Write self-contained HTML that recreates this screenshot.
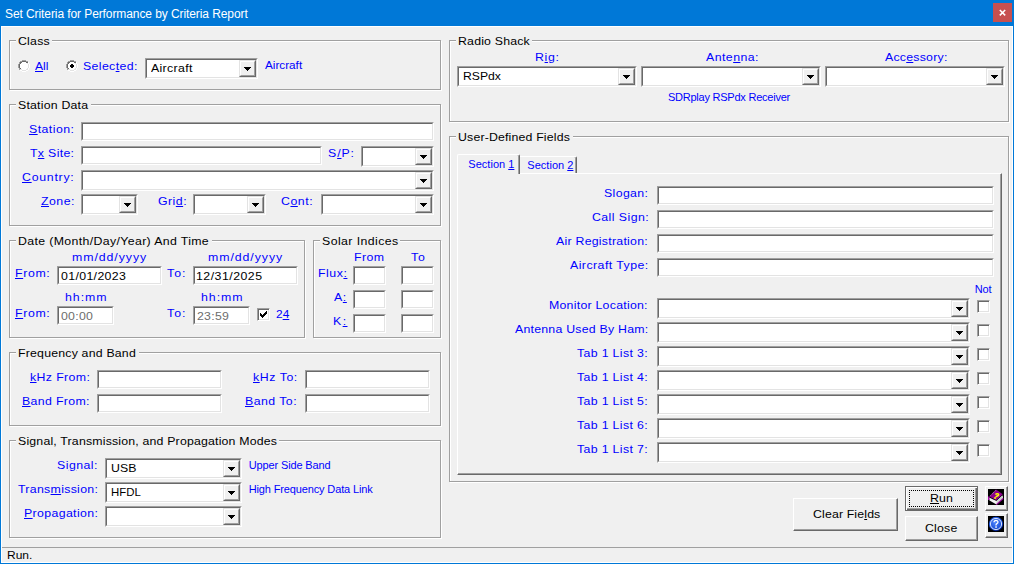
<!DOCTYPE html>
<html><head><meta charset="utf-8"><title>Set Criteria</title><style>
html,body{margin:0;padding:0;width:1014px;height:564px;overflow:hidden;background:#f0f0f0}
body{position:relative}
div{position:absolute;box-sizing:content-box}
.t{transform-origin:0 0;font-family:"Liberation Sans",sans-serif;line-height:13px;white-space:pre}
.t u{text-decoration:underline;text-underline-offset:1px}
.sk{border-style:solid;border-width:1px;border-color:#a0a0a0 #ffffff #ffffff #a0a0a0}
.sk i{position:absolute;left:0;top:0;right:0;bottom:0;border-style:solid;border-width:1px;border-color:#696969 #e3e3e3 #e3e3e3 #696969}
.cb{background:#fff;border-style:solid;border-width:2px 1px 1px 2px;border-color:#696969 #ffffff #ffffff #696969;box-shadow:-1px -1px 0 0 #a0a0a0}
.btn{background:#f0f0f0;border-style:solid;border-width:1px;border-color:#e3e3e3 #696969 #696969 #e3e3e3}
.btn i{position:absolute;left:0;top:0;right:0;bottom:0;border-style:solid;border-width:1px;border-color:#ffffff #a0a0a0 #a0a0a0 #ffffff}
.rb{background:#f0f0f0;border-style:solid;border-width:1px;border-color:#ffffff #696969 #696969 #ffffff}
.rb i{position:absolute;left:0;top:0;right:0;bottom:0;border-style:solid;border-width:0 1px 1px 0;border-color:#a0a0a0}
.defb{background:#f0f0f0;border:1px solid #696969;box-shadow:inset 1px 1px 0 #ffffff, inset -1px -1px 0 #696969}
.defb i{position:absolute;left:0;top:0;right:0;bottom:0;border-style:solid;border-width:0 1px 1px 0;border-color:#a0a0a0;margin:1px}
.chk{width:11px;height:11px;background:#fff;border-style:solid;border-width:1px;border-color:#a0a0a0 #ffffff #ffffff #a0a0a0;box-shadow:inset 1px 1px 0 #696969, inset -1px -1px 0 #e3e3e3}
.tabp{background:#f0f0f0;border-style:solid;border-width:1px;border-color:#ffffff #696969 #696969 #ffffff;box-shadow:inset -1px -1px 0 #a0a0a0}
.tab1{background:#f0f0f0;border-style:solid;border-width:1px 1px 0 1px;border-color:#ffffff #696969 #f0f0f0 #ffffff;border-radius:2px 2px 0 0;box-shadow:inset -1px 0 0 #a0a0a0}
.tab2{background:#f0f0f0;border-style:solid;border-width:1px 1px 0 0;border-color:#ffffff #696969 #f0f0f0 #ffffff;border-radius:0 2px 0 0;box-shadow:inset -1px 0 0 #a0a0a0}
svg{position:absolute}
</style></head>
<body>
<div style="left:0px;top:0px;width:1014px;height:26px;background:#0078d7"></div>
<div style="left:0px;top:26px;width:1px;height:538px;background:#0078d7"></div>
<div style="left:1013px;top:26px;width:1px;height:538px;background:#0078d7"></div>
<div style="left:0px;top:563px;width:1014px;height:1px;background:#0078d7"></div>
<div style="left:1px;top:26px;width:1012px;height:1px;background:#ffffff"></div>
<div style="left:1px;top:26px;width:1px;height:537px;background:#ffffff"></div>
<div style="left:1012px;top:26px;width:1px;height:537px;background:#ffffff"></div>
<div style="left:1px;top:562px;width:1012px;height:1px;background:#ffffff"></div>
<div style="left:993px;top:3px;width:19px;height:19px;background:#c75050"></div>
<svg style="position:absolute;left:993px;top:3px" width="19" height="19" viewBox="0 0 19 19"><path d="M6.8 7 L12.2 12.4 M12.2 7 L6.8 12.4" stroke="#fff" stroke-width="1.5"/></svg>
<div style="left:10px;top:41px;width:432px;height:1px;background:#ffffff"></div>
<div style="left:10px;top:41px;width:1px;height:50px;background:#ffffff"></div>
<div style="left:10px;top:90px;width:432px;height:1px;background:#ffffff"></div>
<div style="left:441px;top:41px;width:1px;height:50px;background:#ffffff"></div>
<div style="left:9px;top:40px;width:432px;height:1px;background:#a0a0a0"></div>
<div style="left:9px;top:40px;width:1px;height:50px;background:#a0a0a0"></div>
<div style="left:9px;top:89px;width:432px;height:1px;background:#a0a0a0"></div>
<div style="left:440px;top:40px;width:1px;height:50px;background:#a0a0a0"></div>
<div style="left:16px;top:40px;width:36px;height:2px;background:#f0f0f0"></div>
<svg style="position:absolute;left:18px;top:60px" width="12" height="12" shape-rendering="crispEdges"><rect x="4" y="2" width="4" height="1" fill="#fff"/><rect x="3" y="3" width="6" height="1" fill="#fff"/><rect x="2" y="4" width="8" height="1" fill="#fff"/><rect x="2" y="5" width="8" height="1" fill="#fff"/><rect x="2" y="6" width="8" height="1" fill="#fff"/><rect x="2" y="7" width="8" height="1" fill="#fff"/><rect x="3" y="8" width="6" height="1" fill="#fff"/><rect x="4" y="9" width="4" height="1" fill="#fff"/><rect x="4" y="0" width="1" height="1" fill="#a0a0a0"/><rect x="5" y="0" width="1" height="1" fill="#a0a0a0"/><rect x="6" y="0" width="1" height="1" fill="#a0a0a0"/><rect x="7" y="0" width="1" height="1" fill="#a0a0a0"/><rect x="2" y="1" width="1" height="1" fill="#a0a0a0"/><rect x="3" y="1" width="1" height="1" fill="#a0a0a0"/><rect x="8" y="1" width="1" height="1" fill="#a0a0a0"/><rect x="9" y="1" width="1" height="1" fill="#a0a0a0"/><rect x="1" y="2" width="1" height="1" fill="#a0a0a0"/><rect x="10" y="2" width="1" height="1" fill="#ffffff"/><rect x="1" y="3" width="1" height="1" fill="#a0a0a0"/><rect x="10" y="3" width="1" height="1" fill="#ffffff"/><rect x="0" y="4" width="1" height="1" fill="#a0a0a0"/><rect x="11" y="4" width="1" height="1" fill="#ffffff"/><rect x="0" y="5" width="1" height="1" fill="#a0a0a0"/><rect x="11" y="5" width="1" height="1" fill="#ffffff"/><rect x="0" y="6" width="1" height="1" fill="#a0a0a0"/><rect x="11" y="6" width="1" height="1" fill="#ffffff"/><rect x="0" y="7" width="1" height="1" fill="#a0a0a0"/><rect x="11" y="7" width="1" height="1" fill="#ffffff"/><rect x="1" y="8" width="1" height="1" fill="#a0a0a0"/><rect x="10" y="8" width="1" height="1" fill="#ffffff"/><rect x="1" y="9" width="1" height="1" fill="#a0a0a0"/><rect x="10" y="9" width="1" height="1" fill="#ffffff"/><rect x="2" y="10" width="1" height="1" fill="#ffffff"/><rect x="3" y="10" width="1" height="1" fill="#ffffff"/><rect x="8" y="10" width="1" height="1" fill="#ffffff"/><rect x="9" y="10" width="1" height="1" fill="#ffffff"/><rect x="4" y="11" width="1" height="1" fill="#ffffff"/><rect x="5" y="11" width="1" height="1" fill="#ffffff"/><rect x="6" y="11" width="1" height="1" fill="#ffffff"/><rect x="7" y="11" width="1" height="1" fill="#ffffff"/><rect x="4" y="1" width="1" height="1" fill="#696969"/><rect x="5" y="1" width="1" height="1" fill="#696969"/><rect x="6" y="1" width="1" height="1" fill="#696969"/><rect x="7" y="1" width="1" height="1" fill="#696969"/><rect x="2" y="2" width="1" height="1" fill="#696969"/><rect x="3" y="2" width="1" height="1" fill="#696969"/><rect x="8" y="2" width="1" height="1" fill="#696969"/><rect x="9" y="2" width="1" height="1" fill="#696969"/><rect x="2" y="3" width="1" height="1" fill="#696969"/><rect x="9" y="3" width="1" height="1" fill="#e3e3e3"/><rect x="1" y="4" width="1" height="1" fill="#696969"/><rect x="10" y="4" width="1" height="1" fill="#e3e3e3"/><rect x="1" y="5" width="1" height="1" fill="#696969"/><rect x="10" y="5" width="1" height="1" fill="#e3e3e3"/><rect x="1" y="6" width="1" height="1" fill="#696969"/><rect x="10" y="6" width="1" height="1" fill="#e3e3e3"/><rect x="1" y="7" width="1" height="1" fill="#696969"/><rect x="10" y="7" width="1" height="1" fill="#e3e3e3"/><rect x="2" y="8" width="1" height="1" fill="#696969"/><rect x="9" y="8" width="1" height="1" fill="#e3e3e3"/><rect x="2" y="9" width="1" height="1" fill="#e3e3e3"/><rect x="3" y="9" width="1" height="1" fill="#e3e3e3"/><rect x="8" y="9" width="1" height="1" fill="#e3e3e3"/><rect x="9" y="9" width="1" height="1" fill="#e3e3e3"/><rect x="4" y="10" width="1" height="1" fill="#e3e3e3"/><rect x="5" y="10" width="1" height="1" fill="#e3e3e3"/><rect x="6" y="10" width="1" height="1" fill="#e3e3e3"/><rect x="7" y="10" width="1" height="1" fill="#e3e3e3"/></svg>
<svg style="position:absolute;left:66px;top:60px" width="12" height="12" shape-rendering="crispEdges"><rect x="4" y="2" width="4" height="1" fill="#fff"/><rect x="3" y="3" width="6" height="1" fill="#fff"/><rect x="2" y="4" width="8" height="1" fill="#fff"/><rect x="2" y="5" width="8" height="1" fill="#fff"/><rect x="2" y="6" width="8" height="1" fill="#fff"/><rect x="2" y="7" width="8" height="1" fill="#fff"/><rect x="3" y="8" width="6" height="1" fill="#fff"/><rect x="4" y="9" width="4" height="1" fill="#fff"/><rect x="4" y="0" width="1" height="1" fill="#a0a0a0"/><rect x="5" y="0" width="1" height="1" fill="#a0a0a0"/><rect x="6" y="0" width="1" height="1" fill="#a0a0a0"/><rect x="7" y="0" width="1" height="1" fill="#a0a0a0"/><rect x="2" y="1" width="1" height="1" fill="#a0a0a0"/><rect x="3" y="1" width="1" height="1" fill="#a0a0a0"/><rect x="8" y="1" width="1" height="1" fill="#a0a0a0"/><rect x="9" y="1" width="1" height="1" fill="#a0a0a0"/><rect x="1" y="2" width="1" height="1" fill="#a0a0a0"/><rect x="10" y="2" width="1" height="1" fill="#ffffff"/><rect x="1" y="3" width="1" height="1" fill="#a0a0a0"/><rect x="10" y="3" width="1" height="1" fill="#ffffff"/><rect x="0" y="4" width="1" height="1" fill="#a0a0a0"/><rect x="11" y="4" width="1" height="1" fill="#ffffff"/><rect x="0" y="5" width="1" height="1" fill="#a0a0a0"/><rect x="11" y="5" width="1" height="1" fill="#ffffff"/><rect x="0" y="6" width="1" height="1" fill="#a0a0a0"/><rect x="11" y="6" width="1" height="1" fill="#ffffff"/><rect x="0" y="7" width="1" height="1" fill="#a0a0a0"/><rect x="11" y="7" width="1" height="1" fill="#ffffff"/><rect x="1" y="8" width="1" height="1" fill="#a0a0a0"/><rect x="10" y="8" width="1" height="1" fill="#ffffff"/><rect x="1" y="9" width="1" height="1" fill="#a0a0a0"/><rect x="10" y="9" width="1" height="1" fill="#ffffff"/><rect x="2" y="10" width="1" height="1" fill="#ffffff"/><rect x="3" y="10" width="1" height="1" fill="#ffffff"/><rect x="8" y="10" width="1" height="1" fill="#ffffff"/><rect x="9" y="10" width="1" height="1" fill="#ffffff"/><rect x="4" y="11" width="1" height="1" fill="#ffffff"/><rect x="5" y="11" width="1" height="1" fill="#ffffff"/><rect x="6" y="11" width="1" height="1" fill="#ffffff"/><rect x="7" y="11" width="1" height="1" fill="#ffffff"/><rect x="4" y="1" width="1" height="1" fill="#696969"/><rect x="5" y="1" width="1" height="1" fill="#696969"/><rect x="6" y="1" width="1" height="1" fill="#696969"/><rect x="7" y="1" width="1" height="1" fill="#696969"/><rect x="2" y="2" width="1" height="1" fill="#696969"/><rect x="3" y="2" width="1" height="1" fill="#696969"/><rect x="8" y="2" width="1" height="1" fill="#696969"/><rect x="9" y="2" width="1" height="1" fill="#696969"/><rect x="2" y="3" width="1" height="1" fill="#696969"/><rect x="9" y="3" width="1" height="1" fill="#e3e3e3"/><rect x="1" y="4" width="1" height="1" fill="#696969"/><rect x="10" y="4" width="1" height="1" fill="#e3e3e3"/><rect x="1" y="5" width="1" height="1" fill="#696969"/><rect x="10" y="5" width="1" height="1" fill="#e3e3e3"/><rect x="1" y="6" width="1" height="1" fill="#696969"/><rect x="10" y="6" width="1" height="1" fill="#e3e3e3"/><rect x="1" y="7" width="1" height="1" fill="#696969"/><rect x="10" y="7" width="1" height="1" fill="#e3e3e3"/><rect x="2" y="8" width="1" height="1" fill="#696969"/><rect x="9" y="8" width="1" height="1" fill="#e3e3e3"/><rect x="2" y="9" width="1" height="1" fill="#e3e3e3"/><rect x="3" y="9" width="1" height="1" fill="#e3e3e3"/><rect x="8" y="9" width="1" height="1" fill="#e3e3e3"/><rect x="9" y="9" width="1" height="1" fill="#e3e3e3"/><rect x="4" y="10" width="1" height="1" fill="#e3e3e3"/><rect x="5" y="10" width="1" height="1" fill="#e3e3e3"/><rect x="6" y="10" width="1" height="1" fill="#e3e3e3"/><rect x="7" y="10" width="1" height="1" fill="#e3e3e3"/><rect x="5" y="4" width="2" height="4" fill="#000"/><rect x="4" y="5" width="4" height="2" fill="#000"/></svg>
<div class="sk" style="left:145px;top:58px;width:111px;height:19px;background:#ffffff"><i></i></div>
<div class="btn" style="left:239px;top:60px;width:15px;height:15px"><i></i></div>
<div style="left:244px;top:67px;width:7px;height:1px;background:#000"></div>
<div style="left:245px;top:68px;width:5px;height:1px;background:#000"></div>
<div style="left:246px;top:69px;width:3px;height:1px;background:#000"></div>
<div style="left:247px;top:70px;width:1px;height:1px;background:#000"></div>
<div style="left:10px;top:105px;width:432px;height:1px;background:#ffffff"></div>
<div style="left:10px;top:105px;width:1px;height:122px;background:#ffffff"></div>
<div style="left:10px;top:226px;width:432px;height:1px;background:#ffffff"></div>
<div style="left:441px;top:105px;width:1px;height:122px;background:#ffffff"></div>
<div style="left:9px;top:104px;width:432px;height:1px;background:#a0a0a0"></div>
<div style="left:9px;top:104px;width:1px;height:122px;background:#a0a0a0"></div>
<div style="left:9px;top:225px;width:432px;height:1px;background:#a0a0a0"></div>
<div style="left:440px;top:104px;width:1px;height:122px;background:#a0a0a0"></div>
<div style="left:16px;top:104px;width:75.4px;height:2px;background:#f0f0f0"></div>
<div class="sk" style="left:81px;top:122px;width:351px;height:17px;background:#ffffff"><i></i></div>
<div class="sk" style="left:81px;top:146px;width:239px;height:17px;background:#ffffff"><i></i></div>
<div class="sk" style="left:361px;top:146px;width:71px;height:19px;background:#ffffff"><i></i></div>
<div class="btn" style="left:415px;top:148px;width:15px;height:15px"><i></i></div>
<div style="left:420px;top:155px;width:7px;height:1px;background:#000"></div>
<div style="left:421px;top:156px;width:5px;height:1px;background:#000"></div>
<div style="left:422px;top:157px;width:3px;height:1px;background:#000"></div>
<div style="left:423px;top:158px;width:1px;height:1px;background:#000"></div>
<div class="sk" style="left:81px;top:170px;width:351px;height:19px;background:#ffffff"><i></i></div>
<div class="btn" style="left:415px;top:172px;width:15px;height:15px"><i></i></div>
<div style="left:420px;top:179px;width:7px;height:1px;background:#000"></div>
<div style="left:421px;top:180px;width:5px;height:1px;background:#000"></div>
<div style="left:422px;top:181px;width:3px;height:1px;background:#000"></div>
<div style="left:423px;top:182px;width:1px;height:1px;background:#000"></div>
<div class="sk" style="left:81px;top:194px;width:55px;height:19px;background:#ffffff"><i></i></div>
<div class="btn" style="left:119px;top:196px;width:15px;height:15px"><i></i></div>
<div style="left:124px;top:203px;width:7px;height:1px;background:#000"></div>
<div style="left:125px;top:204px;width:5px;height:1px;background:#000"></div>
<div style="left:126px;top:205px;width:3px;height:1px;background:#000"></div>
<div style="left:127px;top:206px;width:1px;height:1px;background:#000"></div>
<div class="sk" style="left:193px;top:194px;width:71px;height:19px;background:#ffffff"><i></i></div>
<div class="btn" style="left:247px;top:196px;width:15px;height:15px"><i></i></div>
<div style="left:252px;top:203px;width:7px;height:1px;background:#000"></div>
<div style="left:253px;top:204px;width:5px;height:1px;background:#000"></div>
<div style="left:254px;top:205px;width:3px;height:1px;background:#000"></div>
<div style="left:255px;top:206px;width:1px;height:1px;background:#000"></div>
<div class="sk" style="left:321px;top:194px;width:111px;height:19px;background:#ffffff"><i></i></div>
<div class="btn" style="left:415px;top:196px;width:15px;height:15px"><i></i></div>
<div style="left:420px;top:203px;width:7px;height:1px;background:#000"></div>
<div style="left:421px;top:204px;width:5px;height:1px;background:#000"></div>
<div style="left:422px;top:205px;width:3px;height:1px;background:#000"></div>
<div style="left:423px;top:206px;width:1px;height:1px;background:#000"></div>
<div style="left:10px;top:241px;width:296px;height:1px;background:#ffffff"></div>
<div style="left:10px;top:241px;width:1px;height:98px;background:#ffffff"></div>
<div style="left:10px;top:338px;width:296px;height:1px;background:#ffffff"></div>
<div style="left:305px;top:241px;width:1px;height:98px;background:#ffffff"></div>
<div style="left:9px;top:240px;width:296px;height:1px;background:#a0a0a0"></div>
<div style="left:9px;top:240px;width:1px;height:98px;background:#a0a0a0"></div>
<div style="left:9px;top:337px;width:296px;height:1px;background:#a0a0a0"></div>
<div style="left:304px;top:240px;width:1px;height:98px;background:#a0a0a0"></div>
<div style="left:16px;top:240px;width:195.6px;height:2px;background:#f0f0f0"></div>
<div class="sk" style="left:57px;top:266px;width:103px;height:17px;background:#ffffff"><i></i></div>
<div class="sk" style="left:193px;top:266px;width:103px;height:17px;background:#ffffff"><i></i></div>
<div class="sk" style="left:57px;top:306px;width:55px;height:17px;background:#ffffff"><i></i></div>
<div class="sk" style="left:193px;top:306px;width:55px;height:17px;background:#ffffff"><i></i></div>
<div class="chk" style="left:257px;top:308px"></div>
<svg style="position:absolute;left:257px;top:308px" width="13" height="13" shape-rendering="crispEdges"><rect x="9" y="3" width="1" height="1" fill="#000"/><rect x="8" y="4" width="1" height="1" fill="#000"/><rect x="9" y="4" width="1" height="1" fill="#000"/><rect x="3" y="5" width="1" height="1" fill="#000"/><rect x="7" y="5" width="1" height="1" fill="#000"/><rect x="8" y="5" width="1" height="1" fill="#000"/><rect x="9" y="5" width="1" height="1" fill="#000"/><rect x="3" y="6" width="1" height="1" fill="#000"/><rect x="4" y="6" width="1" height="1" fill="#000"/><rect x="6" y="6" width="1" height="1" fill="#000"/><rect x="7" y="6" width="1" height="1" fill="#000"/><rect x="8" y="6" width="1" height="1" fill="#000"/><rect x="3" y="7" width="1" height="1" fill="#000"/><rect x="4" y="7" width="1" height="1" fill="#000"/><rect x="5" y="7" width="1" height="1" fill="#000"/><rect x="6" y="7" width="1" height="1" fill="#000"/><rect x="7" y="7" width="1" height="1" fill="#000"/><rect x="4" y="8" width="1" height="1" fill="#000"/><rect x="5" y="8" width="1" height="1" fill="#000"/><rect x="6" y="8" width="1" height="1" fill="#000"/><rect x="5" y="9" width="1" height="1" fill="#000"/></svg>
<div style="left:314px;top:241px;width:128px;height:1px;background:#ffffff"></div>
<div style="left:314px;top:241px;width:1px;height:98px;background:#ffffff"></div>
<div style="left:314px;top:338px;width:128px;height:1px;background:#ffffff"></div>
<div style="left:441px;top:241px;width:1px;height:98px;background:#ffffff"></div>
<div style="left:313px;top:240px;width:128px;height:1px;background:#a0a0a0"></div>
<div style="left:313px;top:240px;width:1px;height:98px;background:#a0a0a0"></div>
<div style="left:313px;top:337px;width:128px;height:1px;background:#a0a0a0"></div>
<div style="left:440px;top:240px;width:1px;height:98px;background:#a0a0a0"></div>
<div style="left:319.5px;top:240px;width:80.4px;height:2px;background:#f0f0f0"></div>
<div class="sk" style="left:353px;top:266px;width:31px;height:17px;background:#ffffff"><i></i></div>
<div class="sk" style="left:401px;top:266px;width:31px;height:17px;background:#ffffff"><i></i></div>
<div class="sk" style="left:353px;top:290px;width:31px;height:17px;background:#ffffff"><i></i></div>
<div class="sk" style="left:401px;top:290px;width:31px;height:17px;background:#ffffff"><i></i></div>
<div class="sk" style="left:353px;top:314px;width:31px;height:17px;background:#ffffff"><i></i></div>
<div class="sk" style="left:401px;top:314px;width:31px;height:17px;background:#ffffff"><i></i></div>
<div style="left:10px;top:353px;width:432px;height:1px;background:#ffffff"></div>
<div style="left:10px;top:353px;width:1px;height:74px;background:#ffffff"></div>
<div style="left:10px;top:426px;width:432px;height:1px;background:#ffffff"></div>
<div style="left:441px;top:353px;width:1px;height:74px;background:#ffffff"></div>
<div style="left:9px;top:352px;width:432px;height:1px;background:#a0a0a0"></div>
<div style="left:9px;top:352px;width:1px;height:74px;background:#a0a0a0"></div>
<div style="left:9px;top:425px;width:432px;height:1px;background:#a0a0a0"></div>
<div style="left:440px;top:352px;width:1px;height:74px;background:#a0a0a0"></div>
<div style="left:16px;top:352px;width:122.5px;height:2px;background:#f0f0f0"></div>
<div class="sk" style="left:97px;top:370px;width:123px;height:17px;background:#ffffff"><i></i></div>
<div class="sk" style="left:305px;top:370px;width:123px;height:17px;background:#ffffff"><i></i></div>
<div class="sk" style="left:97px;top:394px;width:123px;height:17px;background:#ffffff"><i></i></div>
<div class="sk" style="left:305px;top:394px;width:123px;height:17px;background:#ffffff"><i></i></div>
<div style="left:10px;top:441px;width:432px;height:1px;background:#ffffff"></div>
<div style="left:10px;top:441px;width:1px;height:98px;background:#ffffff"></div>
<div style="left:10px;top:538px;width:432px;height:1px;background:#ffffff"></div>
<div style="left:441px;top:441px;width:1px;height:98px;background:#ffffff"></div>
<div style="left:9px;top:440px;width:432px;height:1px;background:#a0a0a0"></div>
<div style="left:9px;top:440px;width:1px;height:98px;background:#a0a0a0"></div>
<div style="left:9px;top:537px;width:432px;height:1px;background:#a0a0a0"></div>
<div style="left:440px;top:440px;width:1px;height:98px;background:#a0a0a0"></div>
<div style="left:16px;top:440px;width:263.4px;height:2px;background:#f0f0f0"></div>
<div class="sk" style="left:105px;top:458px;width:135px;height:19px;background:#ffffff"><i></i></div>
<div class="btn" style="left:223px;top:460px;width:15px;height:15px"><i></i></div>
<div style="left:228px;top:467px;width:7px;height:1px;background:#000"></div>
<div style="left:229px;top:468px;width:5px;height:1px;background:#000"></div>
<div style="left:230px;top:469px;width:3px;height:1px;background:#000"></div>
<div style="left:231px;top:470px;width:1px;height:1px;background:#000"></div>
<div class="sk" style="left:105px;top:482px;width:135px;height:19px;background:#ffffff"><i></i></div>
<div class="btn" style="left:223px;top:484px;width:15px;height:15px"><i></i></div>
<div style="left:228px;top:491px;width:7px;height:1px;background:#000"></div>
<div style="left:229px;top:492px;width:5px;height:1px;background:#000"></div>
<div style="left:230px;top:493px;width:3px;height:1px;background:#000"></div>
<div style="left:231px;top:494px;width:1px;height:1px;background:#000"></div>
<div class="sk" style="left:105px;top:506px;width:135px;height:19px;background:#ffffff"><i></i></div>
<div class="btn" style="left:223px;top:508px;width:15px;height:15px"><i></i></div>
<div style="left:228px;top:515px;width:7px;height:1px;background:#000"></div>
<div style="left:229px;top:516px;width:5px;height:1px;background:#000"></div>
<div style="left:230px;top:517px;width:3px;height:1px;background:#000"></div>
<div style="left:231px;top:518px;width:1px;height:1px;background:#000"></div>
<div style="left:450px;top:41px;width:560px;height:1px;background:#ffffff"></div>
<div style="left:450px;top:41px;width:1px;height:82px;background:#ffffff"></div>
<div style="left:450px;top:122px;width:560px;height:1px;background:#ffffff"></div>
<div style="left:1009px;top:41px;width:1px;height:82px;background:#ffffff"></div>
<div style="left:449px;top:40px;width:560px;height:1px;background:#a0a0a0"></div>
<div style="left:449px;top:40px;width:1px;height:82px;background:#a0a0a0"></div>
<div style="left:449px;top:121px;width:560px;height:1px;background:#a0a0a0"></div>
<div style="left:1008px;top:40px;width:1px;height:82px;background:#a0a0a0"></div>
<div style="left:456px;top:40px;width:76.2px;height:2px;background:#f0f0f0"></div>
<div class="sk" style="left:457px;top:66px;width:178px;height:19px;background:#ffffff"><i></i></div>
<div class="btn" style="left:618px;top:68px;width:15px;height:15px"><i></i></div>
<div style="left:623px;top:75px;width:7px;height:1px;background:#000"></div>
<div style="left:624px;top:76px;width:5px;height:1px;background:#000"></div>
<div style="left:625px;top:77px;width:3px;height:1px;background:#000"></div>
<div style="left:626px;top:78px;width:1px;height:1px;background:#000"></div>
<div class="sk" style="left:641px;top:66px;width:178px;height:19px;background:#ffffff"><i></i></div>
<div class="btn" style="left:802px;top:68px;width:15px;height:15px"><i></i></div>
<div style="left:807px;top:75px;width:7px;height:1px;background:#000"></div>
<div style="left:808px;top:76px;width:5px;height:1px;background:#000"></div>
<div style="left:809px;top:77px;width:3px;height:1px;background:#000"></div>
<div style="left:810px;top:78px;width:1px;height:1px;background:#000"></div>
<div class="sk" style="left:825px;top:66px;width:178px;height:19px;background:#ffffff"><i></i></div>
<div class="btn" style="left:986px;top:68px;width:15px;height:15px"><i></i></div>
<div style="left:991px;top:75px;width:7px;height:1px;background:#000"></div>
<div style="left:992px;top:76px;width:5px;height:1px;background:#000"></div>
<div style="left:993px;top:77px;width:3px;height:1px;background:#000"></div>
<div style="left:994px;top:78px;width:1px;height:1px;background:#000"></div>
<div style="left:450px;top:137px;width:560px;height:1px;background:#ffffff"></div>
<div style="left:450px;top:137px;width:1px;height:346px;background:#ffffff"></div>
<div style="left:450px;top:482px;width:560px;height:1px;background:#ffffff"></div>
<div style="left:1009px;top:137px;width:1px;height:346px;background:#ffffff"></div>
<div style="left:449px;top:136px;width:560px;height:1px;background:#a0a0a0"></div>
<div style="left:449px;top:136px;width:1px;height:346px;background:#a0a0a0"></div>
<div style="left:449px;top:481px;width:560px;height:1px;background:#a0a0a0"></div>
<div style="left:1008px;top:136px;width:1px;height:346px;background:#a0a0a0"></div>
<div style="left:456px;top:136px;width:116.5px;height:2px;background:#f0f0f0"></div>
<div class="tabp" style="left:457px;top:173px;width:543px;height:300px"></div>
<div class="tab1" style="left:457px;top:154px;width:61px;height:19px"></div>
<div class="tab2" style="left:520px;top:156px;width:56px;height:16px"></div>
<div class="sk" style="left:657px;top:186px;width:335px;height:17px;background:#ffffff"><i></i></div>
<div class="sk" style="left:657px;top:210px;width:335px;height:17px;background:#ffffff"><i></i></div>
<div class="sk" style="left:657px;top:234px;width:335px;height:17px;background:#ffffff"><i></i></div>
<div class="sk" style="left:657px;top:258px;width:335px;height:17px;background:#ffffff"><i></i></div>
<div class="sk" style="left:657px;top:298px;width:311px;height:19px;background:#ffffff"><i></i></div>
<div class="btn" style="left:951px;top:300px;width:15px;height:15px"><i></i></div>
<div style="left:956px;top:307px;width:7px;height:1px;background:#000"></div>
<div style="left:957px;top:308px;width:5px;height:1px;background:#000"></div>
<div style="left:958px;top:309px;width:3px;height:1px;background:#000"></div>
<div style="left:959px;top:310px;width:1px;height:1px;background:#000"></div>
<div class="chk" style="left:977px;top:300px"></div>
<div class="sk" style="left:657px;top:322px;width:311px;height:19px;background:#ffffff"><i></i></div>
<div class="btn" style="left:951px;top:324px;width:15px;height:15px"><i></i></div>
<div style="left:956px;top:331px;width:7px;height:1px;background:#000"></div>
<div style="left:957px;top:332px;width:5px;height:1px;background:#000"></div>
<div style="left:958px;top:333px;width:3px;height:1px;background:#000"></div>
<div style="left:959px;top:334px;width:1px;height:1px;background:#000"></div>
<div class="chk" style="left:977px;top:324px"></div>
<div class="sk" style="left:657px;top:346px;width:311px;height:19px;background:#ffffff"><i></i></div>
<div class="btn" style="left:951px;top:348px;width:15px;height:15px"><i></i></div>
<div style="left:956px;top:355px;width:7px;height:1px;background:#000"></div>
<div style="left:957px;top:356px;width:5px;height:1px;background:#000"></div>
<div style="left:958px;top:357px;width:3px;height:1px;background:#000"></div>
<div style="left:959px;top:358px;width:1px;height:1px;background:#000"></div>
<div class="chk" style="left:977px;top:348px"></div>
<div class="sk" style="left:657px;top:370px;width:311px;height:19px;background:#ffffff"><i></i></div>
<div class="btn" style="left:951px;top:372px;width:15px;height:15px"><i></i></div>
<div style="left:956px;top:379px;width:7px;height:1px;background:#000"></div>
<div style="left:957px;top:380px;width:5px;height:1px;background:#000"></div>
<div style="left:958px;top:381px;width:3px;height:1px;background:#000"></div>
<div style="left:959px;top:382px;width:1px;height:1px;background:#000"></div>
<div class="chk" style="left:977px;top:372px"></div>
<div class="sk" style="left:657px;top:394px;width:311px;height:19px;background:#ffffff"><i></i></div>
<div class="btn" style="left:951px;top:396px;width:15px;height:15px"><i></i></div>
<div style="left:956px;top:403px;width:7px;height:1px;background:#000"></div>
<div style="left:957px;top:404px;width:5px;height:1px;background:#000"></div>
<div style="left:958px;top:405px;width:3px;height:1px;background:#000"></div>
<div style="left:959px;top:406px;width:1px;height:1px;background:#000"></div>
<div class="chk" style="left:977px;top:396px"></div>
<div class="sk" style="left:657px;top:418px;width:311px;height:19px;background:#ffffff"><i></i></div>
<div class="btn" style="left:951px;top:420px;width:15px;height:15px"><i></i></div>
<div style="left:956px;top:427px;width:7px;height:1px;background:#000"></div>
<div style="left:957px;top:428px;width:5px;height:1px;background:#000"></div>
<div style="left:958px;top:429px;width:3px;height:1px;background:#000"></div>
<div style="left:959px;top:430px;width:1px;height:1px;background:#000"></div>
<div class="chk" style="left:977px;top:420px"></div>
<div class="sk" style="left:657px;top:442px;width:311px;height:19px;background:#ffffff"><i></i></div>
<div class="btn" style="left:951px;top:444px;width:15px;height:15px"><i></i></div>
<div style="left:956px;top:451px;width:7px;height:1px;background:#000"></div>
<div style="left:957px;top:452px;width:5px;height:1px;background:#000"></div>
<div style="left:958px;top:453px;width:3px;height:1px;background:#000"></div>
<div style="left:959px;top:454px;width:1px;height:1px;background:#000"></div>
<div class="chk" style="left:977px;top:444px"></div>
<div class="rb" style="left:793px;top:498px;width:103px;height:31px"><i></i></div>
<div class="defb" style="left:905px;top:486px;width:71px;height:23px"><i></i></div>
<div style="left:909px;top:490px;width:65px;height:17px;border:1px dotted #000;box-sizing:border-box"></div>
<div class="rb" style="left:905px;top:516px;width:71px;height:23px"><i></i></div>
<div class="rb" style="left:985px;top:486px;width:21px;height:23px"><i></i></div>
<div class="rb" style="left:985px;top:513px;width:21px;height:23px"><i></i></div>
<div style="left:988px;top:489px;width:16px;height:16px;background:#000"></div>
<svg style="position:absolute;left:988px;top:489px" width="16" height="16" viewBox="0 0 16 16">
<path d="M1 8.5 L8.5 12 L14.5 6.5 L15 9.5 L8.5 15.5 L1.5 11.5 Z" fill="#f4f4f4"/>
<path d="M8.5 12 L14.5 6.5 L15 9.5 L8.5 15 Z" fill="#cfd4cf"/>
<path d="M15.2 9.3 L8.5 15.6" stroke="#a000a0" stroke-width="1.1"/>
<path d="M8 0.5 L14.8 5.2 L8.3 11.3 L1.2 7.6 Z" fill="#8c008c"/>
<rect x="0" y="7.5" width="1.4" height="3.5" fill="#a000a0"/>
<path d="M7.5 1.6 L2 7" stroke="#b8b8b8" stroke-width="0.9" stroke-dasharray="1 1"/>
<path d="M7.4 5.5 Q8.7 4.2 10.2 4.9 Q11.2 5.7 9.9 6.8 L8.4 7.3 L7.8 8" stroke="#ffff00" stroke-width="1.5" fill="none"/>
<rect x="6.2" y="8.2" width="1.9" height="1.6" fill="#ffff00"/>
</svg>
<div style="left:988px;top:516px;width:16px;height:16px;background:#000"></div>
<svg style="position:absolute;left:988px;top:516px" width="16" height="16" viewBox="0 0 16 16">
<defs><radialGradient id="hg" cx="0.45" cy="0.4" r="0.6"><stop offset="0" stop-color="#4f86ff"/><stop offset="0.75" stop-color="#1a4fd8"/><stop offset="1" stop-color="#001a80"/></radialGradient></defs>
<circle cx="8" cy="8" r="7.2" fill="url(#hg)"/>
<circle cx="8" cy="8" r="5.6" fill="none" stroke="#e8f0ff" stroke-width="0.9"/>
<path d="M6 6.3 Q6.1 4.3 8.1 4.3 Q10 4.4 10 6 Q10 7.1 8.6 7.8 Q8 8.2 8 9.4" stroke="#fff" stroke-width="1.3" fill="none"/>
<rect x="7.3" y="10.3" width="1.5" height="1.5" fill="#fff"/>
</svg>
<div style="left:2px;top:547px;width:1010px;height:1px;background:#a0a0a0"></div>
<div class="t" style="left:5.00px;top:8px;color:#fff;letter-spacing:-0.087px;font-size:12px">Set Criteria for Performance by Criteria Report</div>
<div class="t" style="left:18.18px;top:35px;color:#000;letter-spacing:0.196px;font-size:11px;transform:scaleX(1.120)">Class</div>
<div class="t" style="left:35.30px;top:60px;color:#0000ff;letter-spacing:0.000px;font-size:11px;transform:scaleX(1.100)"><u>A</u>ll</div>
<div class="t" style="left:82.78px;top:60px;color:#0000ff;letter-spacing:0.326px;font-size:11px;transform:scaleX(1.120)">Selec<u>t</u>ed:</div>
<div class="t" style="left:150.50px;top:62px;color:#000;letter-spacing:0.293px;font-size:11px;transform:scaleX(1.120)">Aircraft</div>
<div class="t" style="left:265.30px;top:59px;color:#0000ff;letter-spacing:0.000px;font-size:11px;transform:scaleX(1.066)">Aircraft</div>
<div class="t" style="left:18.18px;top:99px;color:#000;letter-spacing:0.179px;font-size:11px;transform:scaleX(1.120)">Station Data</div>
<div class="t" style="left:28.68px;top:123px;color:#0000ff;letter-spacing:0.406px;font-size:11px;transform:scaleX(1.120)"><u>S</u>tation:</div>
<div class="t" style="left:29.60px;top:147px;color:#0000ff;letter-spacing:0.288px;font-size:11px;transform:scaleX(1.120)">T<u>x</u> Site:</div>
<div class="t" style="left:328.18px;top:147px;color:#0000ff;letter-spacing:0.810px;font-size:11px;transform:scaleX(1.120)">S<u>/</u>P:</div>
<div class="t" style="left:22.18px;top:171px;color:#0000ff;letter-spacing:0.663px;font-size:11px;transform:scaleX(1.120)"><u>C</u>ountry:</div>
<div class="t" style="left:41.10px;top:195px;color:#0000ff;letter-spacing:0.438px;font-size:11px;transform:scaleX(1.120)"><u>Z</u>one:</div>
<div class="t" style="left:157.90px;top:195px;color:#0000ff;letter-spacing:0.411px;font-size:11px;transform:scaleX(1.120)">Gri<u>d</u>:</div>
<div class="t" style="left:281.48px;top:195px;color:#0000ff;letter-spacing:0.469px;font-size:11px;transform:scaleX(1.120)">C<u>o</u>nt:</div>
<div class="t" style="left:18.18px;top:235px;color:#000;letter-spacing:0.320px;font-size:11px;transform:scaleX(1.120)">Date (Month/Day/Year) And Time</div>
<div class="t" style="left:71.68px;top:251px;color:#0000ff;letter-spacing:0.837px;font-size:11px;transform:scaleX(1.120)">mm/dd/yyyy</div>
<div class="t" style="left:207.78px;top:251px;color:#0000ff;letter-spacing:0.837px;font-size:11px;transform:scaleX(1.120)">mm/dd/yyyy</div>
<div class="t" style="left:15.38px;top:267px;color:#0000ff;letter-spacing:0.571px;font-size:11px;transform:scaleX(1.120)"><u>F</u>rom:</div>
<div class="t" style="left:61.30px;top:270px;color:#000;letter-spacing:0.317px;font-size:11px;transform:scaleX(1.120)">01/01/2023</div>
<div class="t" style="left:167.10px;top:267px;color:#0000ff;letter-spacing:0.902px;font-size:11px;transform:scaleX(1.120)">To:</div>
<div class="t" style="left:196.18px;top:270px;color:#000;letter-spacing:0.429px;font-size:11px;transform:scaleX(1.120)">12/31/2025</div>
<div class="t" style="left:64.88px;top:291px;color:#0000ff;letter-spacing:0.884px;font-size:11px;transform:scaleX(1.120)">hh:mm</div>
<div class="t" style="left:200.98px;top:291px;color:#0000ff;letter-spacing:0.884px;font-size:11px;transform:scaleX(1.120)">hh:mm</div>
<div class="t" style="left:15.38px;top:307px;color:#0000ff;letter-spacing:0.571px;font-size:11px;transform:scaleX(1.120)"><u>F</u>rom:</div>
<div class="t" style="left:61.30px;top:310px;color:#6d6d6d;letter-spacing:0.237px;font-size:11px;transform:scaleX(1.120)">00:00</div>
<div class="t" style="left:167.10px;top:307px;color:#0000ff;letter-spacing:0.902px;font-size:11px;transform:scaleX(1.120)">To:</div>
<div class="t" style="left:197.30px;top:310px;color:#6d6d6d;letter-spacing:0.237px;font-size:11px;transform:scaleX(1.120)">23:59</div>
<div class="t" style="left:275.50px;top:308px;color:#0000ff;letter-spacing:0.000px;font-size:11px;transform:scaleX(1.083)">2<u>4</u></div>
<div class="t" style="left:321.68px;top:235px;color:#000;letter-spacing:0.369px;font-size:11px;transform:scaleX(1.120)">Solar Indices</div>
<div class="t" style="left:354.48px;top:251px;color:#0000ff;letter-spacing:0.363px;font-size:11px;transform:scaleX(1.120)">From</div>
<div class="t" style="left:410.60px;top:251px;color:#0000ff;letter-spacing:0.786px;font-size:11px;transform:scaleX(1.120)">To</div>
<div class="t" style="left:317.68px;top:267px;color:#0000ff;letter-spacing:0.482px;font-size:11px;transform:scaleX(1.120)">Flux<u>:</u></div>
<div class="t" style="left:334.10px;top:291px;color:#0000ff;letter-spacing:0.536px;font-size:11px;transform:scaleX(1.120)">A<u>:</u></div>
<div class="t" style="left:333.38px;top:315px;color:#0000ff;letter-spacing:1.268px;font-size:11px;transform:scaleX(1.120)">K<u>:</u></div>
<div class="t" style="left:18.18px;top:347px;color:#000;letter-spacing:0.178px;font-size:11px;transform:scaleX(1.120)">Frequency and Band</div>
<div class="t" style="left:30.18px;top:371px;color:#0000ff;letter-spacing:0.337px;font-size:11px;transform:scaleX(1.120)"><u>k</u>Hz From:</div>
<div class="t" style="left:253.08px;top:371px;color:#0000ff;letter-spacing:0.506px;font-size:11px;transform:scaleX(1.120)"><u>k</u>Hz To:</div>
<div class="t" style="left:22.28px;top:395px;color:#0000ff;letter-spacing:0.306px;font-size:11px;transform:scaleX(1.120)"><u>B</u>and From:</div>
<div class="t" style="left:245.48px;top:395px;color:#0000ff;letter-spacing:0.403px;font-size:11px;transform:scaleX(1.120)"><u>B</u>and To:</div>
<div class="t" style="left:18.18px;top:435px;color:#000;letter-spacing:0.162px;font-size:11px;transform:scaleX(1.120)">Signal, Transmission, and Propagation Modes</div>
<div class="t" style="left:57.38px;top:459px;color:#0000ff;letter-spacing:0.411px;font-size:11px;transform:scaleX(1.120)">Si<u>g</u>nal:</div>
<div class="t" style="left:111.38px;top:462px;color:#000;letter-spacing:0.036px;font-size:11px;transform:scaleX(1.120)">USB</div>
<div class="t" style="left:248.70px;top:459px;color:#0000ff;letter-spacing:-0.129px;font-size:11px">Upper Side Band</div>
<div class="t" style="left:18.40px;top:483px;color:#0000ff;letter-spacing:0.272px;font-size:11px;transform:scaleX(1.120)">Trans<u>m</u>ission:</div>
<div class="t" style="left:111.46px;top:486px;color:#000;letter-spacing:0.000px;font-size:11px;transform:scaleX(1.037)">HFDL</div>
<div class="t" style="left:248.70px;top:483px;color:#0000ff;letter-spacing:-0.135px;font-size:11px">High Frequency Data Link</div>
<div class="t" style="left:23.68px;top:507px;color:#0000ff;letter-spacing:0.323px;font-size:11px;transform:scaleX(1.120)"><u>P</u>ropagation:</div>
<div class="t" style="left:458.18px;top:35px;color:#000;letter-spacing:0.168px;font-size:11px;transform:scaleX(1.120)">Radio Shack</div>
<div class="t" style="left:535.28px;top:51px;color:#0000ff;letter-spacing:0.577px;font-size:11px;transform:scaleX(1.120)">R<u>i</u>g:</div>
<div class="t" style="left:705.80px;top:51px;color:#0000ff;letter-spacing:0.401px;font-size:11px;transform:scaleX(1.120)">Ante<u>n</u>na:</div>
<div class="t" style="left:884.50px;top:51px;color:#0000ff;letter-spacing:0.202px;font-size:11px;transform:scaleX(1.120)">Acc<u>e</u>ssory:</div>
<div class="t" style="left:463.39px;top:70px;color:#000;letter-spacing:0.000px;font-size:11px;transform:scaleX(1.106)">RSPdx</div>
<div class="t" style="left:667.90px;top:91px;color:#0000ff;letter-spacing:-0.229px;font-size:11px">SDRplay RSPdx Receiver</div>
<div class="t" style="left:458.18px;top:131px;color:#000;letter-spacing:0.148px;font-size:11px;transform:scaleX(1.120)">User-Defined Fields</div>
<div class="t" style="left:468.30px;top:158px;color:#0000ff;letter-spacing:0.025px;font-size:11px">Section <u>1</u></div>
<div class="t" style="left:527.30px;top:159px;color:#0000ff;letter-spacing:0.025px;font-size:11px">Section <u>2</u></div>
<div class="t" style="left:603.88px;top:187px;color:#0000ff;letter-spacing:0.324px;font-size:11px;transform:scaleX(1.120)">Slogan:</div>
<div class="t" style="left:592.08px;top:211px;color:#0000ff;letter-spacing:0.387px;font-size:11px;transform:scaleX(1.120)">Call Sign:</div>
<div class="t" style="left:556.10px;top:235px;color:#0000ff;letter-spacing:0.225px;font-size:11px;transform:scaleX(1.120)">Air Registration:</div>
<div class="t" style="left:569.90px;top:259px;color:#0000ff;letter-spacing:0.407px;font-size:11px;transform:scaleX(1.120)">Aircraft Type:</div>
<div class="t" style="left:974.70px;top:283px;color:#0000ff;letter-spacing:-0.100px;font-size:11px">Not</div>
<div class="t" style="left:549.38px;top:299px;color:#0000ff;letter-spacing:0.225px;font-size:11px;transform:scaleX(1.120)">Monitor Location:</div>
<div class="t" style="left:515.40px;top:323px;color:#0000ff;letter-spacing:0.208px;font-size:11px;transform:scaleX(1.120)">Antenna Used By Ham:</div>
<div class="t" style="left:577.30px;top:347px;color:#0000ff;letter-spacing:0.307px;font-size:11px;transform:scaleX(1.120)">Tab 1 List 3:</div>
<div class="t" style="left:577.30px;top:371px;color:#0000ff;letter-spacing:0.307px;font-size:11px;transform:scaleX(1.120)">Tab 1 List 4:</div>
<div class="t" style="left:577.30px;top:395px;color:#0000ff;letter-spacing:0.307px;font-size:11px;transform:scaleX(1.120)">Tab 1 List 5:</div>
<div class="t" style="left:577.30px;top:419px;color:#0000ff;letter-spacing:0.307px;font-size:11px;transform:scaleX(1.120)">Tab 1 List 6:</div>
<div class="t" style="left:577.30px;top:443px;color:#0000ff;letter-spacing:0.307px;font-size:11px;transform:scaleX(1.120)">Tab 1 List 7:</div>
<div class="t" style="left:812.68px;top:508px;color:#000;letter-spacing:0.125px;font-size:11px;transform:scaleX(1.120)">Clear Fie<u>l</u>ds</div>
<div class="t" style="left:929.68px;top:492px;color:#000;letter-spacing:0.143px;font-size:11px;transform:scaleX(1.120)"><u>R</u>un</div>
<div class="t" style="left:924.68px;top:522px;color:#000;letter-spacing:0.170px;font-size:11px;transform:scaleX(1.120)">Close</div>
<div class="t" style="left:6.71px;top:549px;color:#000;letter-spacing:0.000px;font-size:11px;transform:scaleX(1.091)">Run.</div>
</body></html>
